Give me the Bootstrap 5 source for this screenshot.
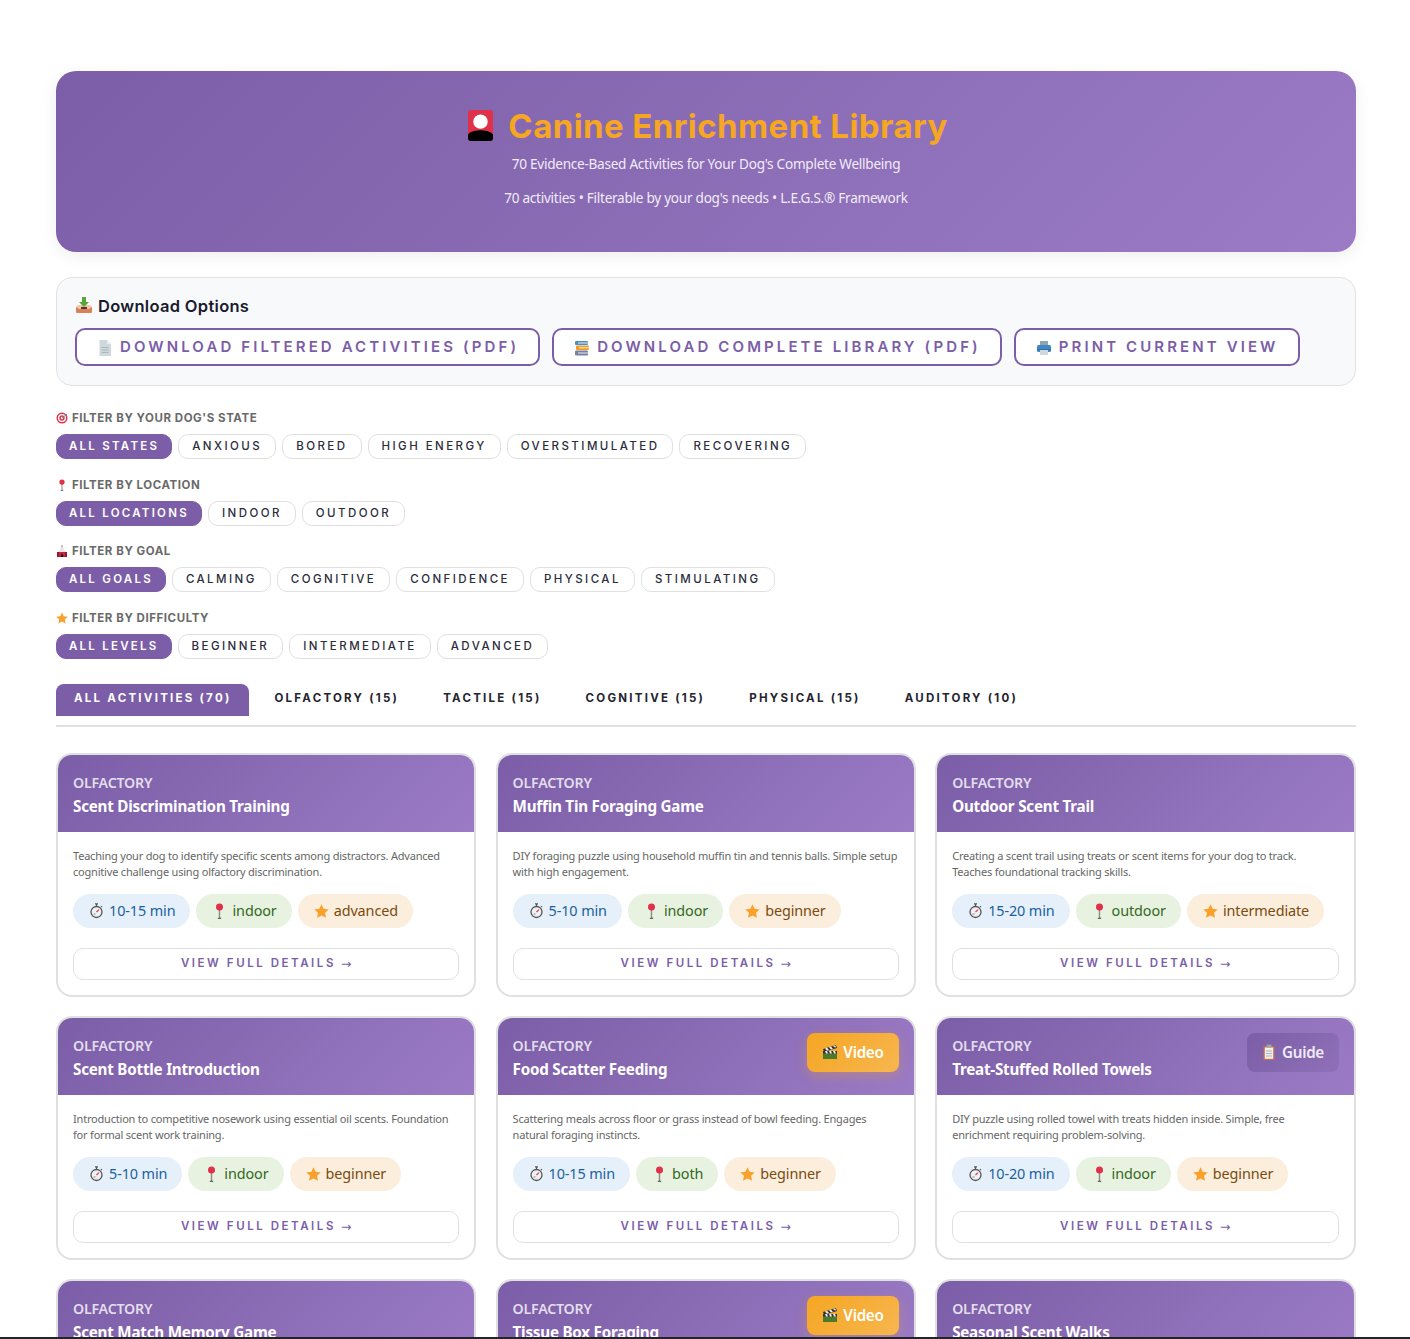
<!DOCTYPE html>
<html lang="en">
<head>
  <meta charset="UTF-8">
  <meta name="viewport" content="width=device-width, initial-scale=1">
  <title>Canine Enrichment Library</title>
  <link href="https://cdn.jsdelivr.net/npm/bootstrap@5.3.0/dist/css/bootstrap.min.css" rel="stylesheet">
  <style>
    html, body { height: 1339px; overflow: hidden; }
    body {
      background: #fff;
      font-family: "Noto Sans", "Open Sans", sans-serif;
      color: #2c2c2c;
    }
    .page-wrap { padding: 71px 54px 0 56px; }
    .hero {
      height: 181px;
      border-radius: 20px;
      padding-top: 33px;
      background: linear-gradient(135deg, #7b5ea7, #9b7bc5);
      box-shadow: 0 4px 16px rgba(0,0,0,.07);
      color: #f1ecf7;
      text-align: center;
    }
    .hero h1 {
      font-family: Inter, sans-serif;
      font-size: 33px;
      line-height: 44px;
      font-weight: 700;
      letter-spacing: .42px;
      color: #f5a623;
      margin: 0 0 6px;
      padding-left: 4px;
    }
    .hero h1 svg { width: 25px; height: 31px; margin-right: 15px; vertical-align: -3px; }
    .hero p { font-size: 13.6px; line-height: 20px; letter-spacing: -.27px; margin: 0 0 14px; }
    .dl-panel {
      margin-top: 25px;
      height: 109px;
      padding: 17px 18px 0;
      background: #f8f9fa;
      border: 1px solid #e2e2e2;
      border-radius: 16px;
    }
    .dl-title { font-family: Inter, sans-serif; font-size: 16.5px; font-weight: 600; line-height: 22px; color: #1a1a2e; margin-bottom: 11px; letter-spacing: .3px; }
    .dl-title svg { width: 18px; height: 18px; vertical-align: -2px; margin-right: 5px; }
    .dl-row { gap: 12px; }
    .dl-btn {
      display: flex; align-items: center; justify-content: center;
      height: 38px;
      padding: 1px 19px 0 20px;
      background: #fff;
      border: 2px solid #7b5ea7;
      border-radius: 10px;
      font-family: Inter, sans-serif;
      font-size: 15px;
      font-weight: 600;
      letter-spacing: 3.1px;
      color: #7b5ea7;
    }
    .dl-btn svg { width: 16px; height: 16px; margin-right: 7px; }
    .filter-wrap { margin-top: 23px; }
    .filter-group { height: 66.7px; }
    .filter-label {
      font-family: Inter, sans-serif;
      font-size: 11.5px; font-weight: 700; line-height: 18px;
      letter-spacing: .55px; color: #6a6a6a; margin-bottom: 7px;
    }
    .filter-label svg { width: 12px; height: 12px; vertical-align: -2px; margin-right: 4px; }
    .chip-row { gap: 6px; }
    .chip {
      display: inline-flex; align-items: center;
      height: 25px; padding: 0 13px;
      border: 1px solid #e0e0e0; border-radius: 10px;
      background: #fff;
      font-family: Inter, sans-serif;
      font-size: 11.5px; font-weight: 500; letter-spacing: 2.45px; color: #2c2c3c;
    }
    .chip.on { background: #7b5ea7; border-color: #7b5ea7; color: #fff; font-weight: 600; letter-spacing: 2.25px; padding: 0 12px; }
    .tab-row { margin-top: 8px; height: 43px; border-bottom: 2px solid #e0e0e0; }
    .tab-item {
      height: 32px; padding: 0 18px 2px;
      display: flex; align-items: center;
      font-family: Inter, sans-serif;
      font-size: 11.5px; font-weight: 700; letter-spacing: 2.25px; color: #24242f;
      margin-right: 8px;
    }
    .tab-item.on { background: #7b5ea7; color: #fff; border-radius: 8px 8px 0 0; margin-right: 7px; }
    .act-grid { margin-top: 7px; margin-right: -9.1px; --bs-gutter-x: 19.2px; --bs-gutter-y: 19.2px; }
    .act-card {
      height: 243.8px;
      position: relative;
      border: 2px solid #e0e0e0;
      border-radius: 16px;
      background: #fff;
      overflow: hidden;
    }
    .act-head {
      height: 77px; padding: 18px 15px 0;
      background: linear-gradient(135deg, #7b5ea7, #9b7bc5);
      color: #fff;
    }
    .act-cat { font-size: 14.2px; font-weight: 600; line-height: 20px; letter-spacing: -.22px; color: rgba(255,255,255,.8); margin-bottom: 2px; }
    .act-title { font-size: 15.2px; font-weight: 700; line-height: 23px; letter-spacing: -.22px; }
    .act-badge {
      position: absolute; top: 15px; right: 15px;
      width: 92px; height: 39px;
      display: flex; align-items: center; justify-content: center;
      border-radius: 8px;
      font-size: 15.2px; font-weight: 600; letter-spacing: -.3px; color: #fff;
    }
    .act-badge svg { width: 16px; height: 16px; margin-right: 5px; }
    .act-badge.vid { background: linear-gradient(135deg, #f5a623, #f7b64f); box-shadow: 0 4px 12px rgba(245,166,35,.3); }
    .act-badge.gd { background: linear-gradient(135deg, #7b5ea7, #8f70b8); color: #f0ecf6; }
    .act-body { padding: 16px 15px 0; }
    .act-desc { font-size: 11px; line-height: 16.5px; letter-spacing: -.2px; color: #666; margin: 0 0 13px; height: 33px; }
    .pill-row { gap: 6px; }
    .pill {
      height: 34px; padding: 0 15px 0 16px;
      display: inline-flex; align-items: center;
      border-radius: 17px;
      font-size: 14.4px; letter-spacing: -.1px;
    }
    .pill svg { width: 15px; height: 16px; margin-right: 5px; }
    .pill.t { background: #e6f0fa; color: #1a5fa0; }
    .pill.l { background: #e8f2e0; color: #33691e; }
    .pill.d { background: #fbeedc; color: #7a4a10; }
    .view-btn {
      display: flex; align-items: center; justify-content: center;
      height: 32px; margin-top: 20px;
      border: 1px solid #e0e0e0; border-radius: 10px;
      font-family: Inter, sans-serif;
      font-size: 11.5px; font-weight: 600; letter-spacing: 2.55px; color: #7b5ea7;
    }
    .view-btn span { font-family: "DejaVu Sans", sans-serif; letter-spacing: 0; font-weight: 400; font-size: 12.5px; margin-left: 5px; }
    .bottom-edge { position: fixed; left: 0; right: 0; bottom: 0; height: 2px; background: #26222a; }
  </style>
</head>
<body>

<svg width="0" height="0" class="position-absolute">
  <symbol id="i-hana" viewBox="0 0 26 32"><rect width="26" height="32" rx="3" fill="#e0314a"/><circle cx="13" cy="12" r="7.5" fill="#fff"/><path d="M0 25c4-3 8-4 13-4s9 1 13 4v4a3 3 0 0 1-3 3H3a3 3 0 0 1-3-3z" fill="#000"/></symbol>
  <symbol id="i-inbox" viewBox="0 0 18 18"><path d="M1 11h16v5a1 1 0 0 1-1 1H2a1 1 0 0 1-1-1z" fill="#d9805a"/><path d="M1 11l2-2h12l2 2-3 2H4z" fill="#f0c8a8"/><path d="M6 11h6v2H6z" fill="#5a3626"/><path d="M7 1h4v5h3l-5 5-5-5h3z" fill="#57a83c"/></symbol>
  <symbol id="i-doc" viewBox="0 0 16 16"><path d="M2.5 0H10l4 4v12H2.500z" fill="#cfd8dc"/><path d="M10 0l4 4h-4z" fill="#eceff1"/><path d="M4.500 7h7v1h-7zm0 2.500h7v1h-7zm0 2.500h7v1h-7z" fill="#a9b6bc"/></symbol>
  <symbol id="i-books" viewBox="0 0 16 16"><rect x="1" y="1" width="13" height="4" rx="1" fill="#4f8fc0"/><rect x="2" y="5.500" width="13" height="4.500" rx="1" fill="#f39c25"/><rect x="1" y="10.500" width="13" height="5" rx="1" fill="#7b7f9e"/><path d="M4 2.500h10v1H4zm1 4.700h10v1H5zm-1 5.300h10v1H4z" fill="#e8edf0"/></symbol>
  <symbol id="i-print" viewBox="0 0 16 16"><rect x="4" y="1" width="8" height="5" fill="#90a4ae"/><rect x="1" y="5" width="14" height="7" rx="1.500" fill="#3f87c5"/><rect x="4" y="10" width="8" height="5" fill="#cfd8dc"/><path d="M1 9h14v1H1z" fill="#2f6ea5"/></symbol>
  <symbol id="i-target" viewBox="0 0 12 12"><circle cx="6" cy="6" r="5.500" fill="#e0314a"/><circle cx="6" cy="6" r="4" fill="#fff"/><circle cx="6" cy="6" r="2.700" fill="#e0314a"/><circle cx="6" cy="6" r="1.200" fill="#fff"/><path d="M6 6l5-4" stroke="#4f8fc0" stroke-width="1"/></symbol>
  <symbol id="i-pin" viewBox="0 0 14 16"><path d="M7 6v9" stroke="#8a8a8a" stroke-width="1.400"/><path d="M5.300 15.300h3.400" stroke="#444" stroke-width="1"/><circle cx="7" cy="4" r="3.500" fill="#e0314a"/></symbol>
  <symbol id="i-tent" viewBox="0 0 12 12"><path d="M6 0v3" stroke="#888" stroke-width="1"/><path d="M6 2L10 7H2z" fill="#e9e4e4"/><rect x="1" y="7" width="10" height="5" fill="#c62840"/><path d="M4.500 12L6 8l1.500 4z" fill="#111"/><path d="M1 7h2v5H1zm8 0h2v5H9z" fill="#8c1c30"/></symbol>
  <symbol id="i-star" viewBox="0 0 14 14"><path d="M7 .6l2 4.300 4.700.6-3.400 3.200.9 4.700L7 11.100l-4.200 2.300.9-4.700L.3 5.500 5 4.900z" fill="#f9a12c"/></symbol>
  <symbol id="i-watch" viewBox="0 0 14 16"><path d="M5.500 .8h3M7 1v2M11.500 3.200l1 1" stroke="#555" stroke-width="1.200" fill="none"/><circle cx="7" cy="9" r="5.500" fill="#eef1f3" stroke="#555" stroke-width="1.300"/><path d="M7 9l2.500-2.300" stroke="#d9344a" stroke-width="1.100"/><path d="M4 11h2" stroke="#888" stroke-width="1"/></symbol>
  <symbol id="i-clap" viewBox="0 0 16 16"><rect x="1" y="7" width="14" height="8" fill="#4a7a2a"/><path d="M1 5l13-4 1 3-13 4z" fill="#333"/><path d="M3 4.400l2-.6 2 2.300-2 .6zm4-1.200l2-.6 2 2.300-2 .6zm4-1.200l2-.6 1.400 1.700-1.400.5z" fill="#eee"/><rect x="1" y="7" width="14" height="2.500" fill="#333"/><path d="M3 7h2l1 2.500H4zm4 0h2l1 2.500H8zm4 0h2l1 2.500h-2z" fill="#eee"/></symbol>
  <symbol id="i-clip" viewBox="0 0 16 16"><rect x="2.500" y="2" width="11" height="14" rx="1" fill="#c96f4a"/><rect x="3.800" y="3.500" width="8.400" height="11.300" fill="#f1f1f1"/><rect x="5.500" y=".5" width="5" height="3" rx="1" fill="#9aa5ab"/><path d="M5 6.500h6v1H5zm0 2.500h6v1H5zm0 2.500h6v1H5z" fill="#a9b2b8"/></symbol>
</svg>

<div class="page-wrap">
  <!-- Header -->
  <div class="hero">
    <h1><svg><use href="#i-hana"/></svg>Canine Enrichment Library</h1>
    <p>70 Evidence-Based Activities for Your Dog's Complete Wellbeing</p>
    <p>70 activities • Filterable by your dog's needs • L.E.G.S.® Framework</p>
  </div>

  <!-- Download options -->
  <div class="dl-panel">
    <div class="dl-title"><svg><use href="#i-inbox"/></svg>Download Options</div>
    <div class="d-flex dl-row">
      <a class="dl-btn text-decoration-none"><svg><use href="#i-doc"/></svg>DOWNLOAD FILTERED ACTIVITIES (PDF)</a>
      <a class="dl-btn text-decoration-none"><svg><use href="#i-books"/></svg>DOWNLOAD COMPLETE LIBRARY (PDF)</a>
      <a class="dl-btn text-decoration-none"><svg><use href="#i-print"/></svg>PRINT CURRENT VIEW</a>
    </div>
  </div>

  <!-- Filters -->
  <div class="filter-wrap" id="filters"></div>

  <!-- Tabs -->
  <div class="tab-row d-flex" id="tabs"></div>

  <!-- Activity cards -->
  <div class="row row-cols-3 act-grid" id="cards"></div>
</div>

<div class="bottom-edge"></div>

<script>
  const icon = (name) => `<svg><use href="#i-${name}"/></svg>`;

  const filters = [
    {icon: "target", label: "FILTER BY YOUR DOG'S STATE", opts: ["ALL STATES", "ANXIOUS", "BORED", "HIGH ENERGY", "OVERSTIMULATED", "RECOVERING"]},
    {icon: "pin", label: "FILTER BY LOCATION", opts: ["ALL LOCATIONS", "INDOOR", "OUTDOOR"]},
    {icon: "tent", label: "FILTER BY GOAL", opts: ["ALL GOALS", "CALMING", "COGNITIVE", "CONFIDENCE", "PHYSICAL", "STIMULATING"]},
    {icon: "star", label: "FILTER BY DIFFICULTY", opts: ["ALL LEVELS", "BEGINNER", "INTERMEDIATE", "ADVANCED"]}
  ];
  document.getElementById('filters').innerHTML = filters.map(f => `
    <div class="filter-group">
      <div class="filter-label">${icon(f.icon)}${f.label}</div>
      <div class="d-flex chip-row">${f.opts.map((o, i) => `<span class="chip ${i === 0 ? 'on' : ''}">${o}</span>`).join('')}</div>
    </div>`).join('');

  const tabs = ["ALL ACTIVITIES (70)", "OLFACTORY (15)", "TACTILE (15)", "COGNITIVE (15)", "PHYSICAL (15)", "AUDITORY (10)"];
  document.getElementById('tabs').innerHTML = tabs.map((t, i) => `<div class="tab-item ${i === 0 ? 'on' : ''}">${t}</div>`).join('');

  const activities = [
    {title: "Scent Discrimination Training", desc: "Teaching your dog to identify specific scents among distractors. Advanced cognitive challenge using olfactory discrimination.", time: "10-15 min", loc: "indoor", level: "advanced"},
    {title: "Muffin Tin Foraging Game", desc: "DIY foraging puzzle using household muffin tin and tennis balls. Simple setup with high engagement.", time: "5-10 min", loc: "indoor", level: "beginner"},
    {title: "Outdoor Scent Trail", desc: "Creating a scent trail using treats or scent items for your dog to track. Teaches foundational tracking skills.", time: "15-20 min", loc: "outdoor", level: "intermediate"},
    {title: "Scent Bottle Introduction", desc: "Introduction to competitive nosework using essential oil scents. Foundation for formal scent work training.", time: "5-10 min", loc: "indoor", level: "beginner"},
    {title: "Food Scatter Feeding", desc: "Scattering meals across floor or grass instead of bowl feeding. Engages natural foraging instincts.", time: "10-15 min", loc: "both", level: "beginner", badge: "vid"},
    {title: "Treat-Stuffed Rolled Towels", desc: "DIY puzzle using rolled towel with treats hidden inside. Simple, free enrichment requiring problem-solving.", time: "10-20 min", loc: "indoor", level: "beginner", badge: "gd"},
    {title: "Scent Match Memory Game"},
    {title: "Tissue Box Foraging", badge: "vid"},
    {title: "Seasonal Scent Walks"}
  ];

  const badgeHtml = (b) => {
    if (b === "vid") return `<div class="act-badge vid">${icon('clap')}Video</div>`;
    if (b === "gd") return `<div class="act-badge gd">${icon('clip')}Guide</div>`;
    return '';
  };

  // last row is cut by the window, only its header shows
  const bodyHtml = (a) => !a.desc ? '' : `
        <div class="act-body">
          <p class="act-desc">${a.desc}</p>
          <div class="d-flex pill-row">
            <span class="pill t">${icon('watch')}${a.time}</span>
            <span class="pill l">${icon('pin')}${a.loc}</span>
            <span class="pill d">${icon('star')}${a.level}</span>
          </div>
          <a class="view-btn text-decoration-none">VIEW FULL DETAILS<span>→</span></a>
        </div>`;

  document.getElementById('cards').innerHTML = activities.map(a => `
    <div class="col">
      <div class="act-card">
        <div class="act-head">
          <div class="act-cat">OLFACTORY</div>
          <div class="act-title">${a.title}</div>
        </div>
        ${badgeHtml(a.badge)}${bodyHtml(a)}
      </div>
    </div>`).join('');
</script>
<script src="https://cdn.jsdelivr.net/npm/bootstrap@5.3.0/dist/js/bootstrap.bundle.min.js"></script>
</body>
</html>
